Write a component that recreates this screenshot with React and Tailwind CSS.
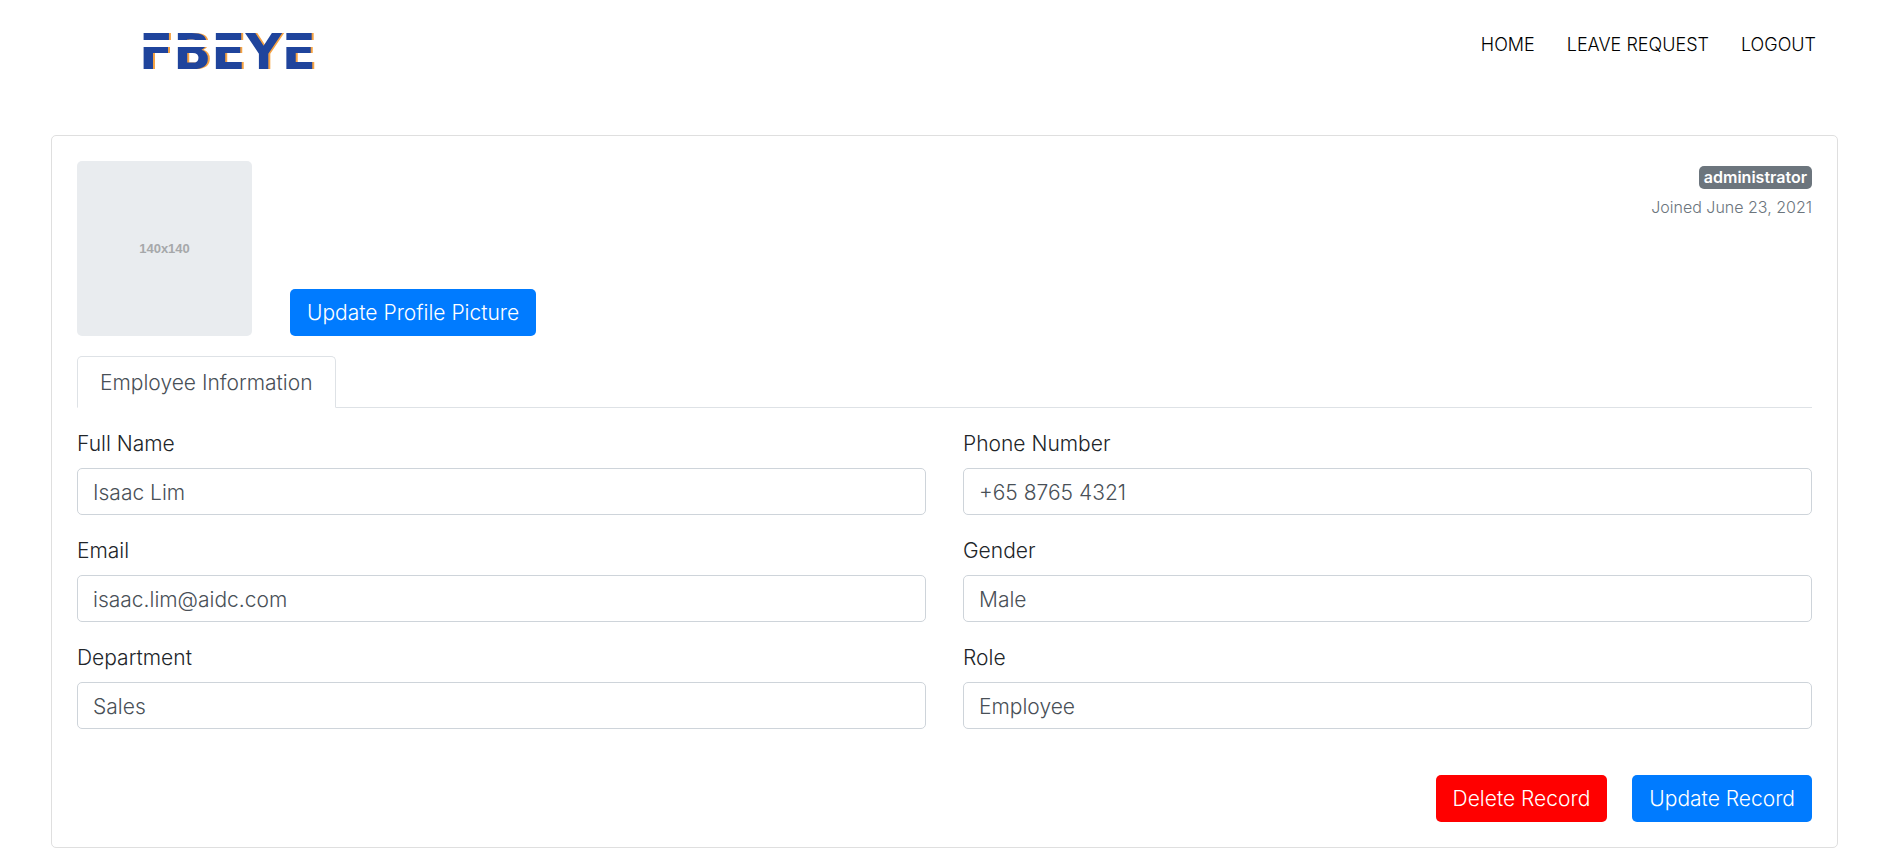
const slit =
  'bg-[linear-gradient(to_bottom,#1f449c_0_12px,transparent_12px_19px,#1f449c_19px)] bg-clip-text text-transparent';

const fields = [
  { id: 'name', label: 'Full Name', value: 'Isaac Lim', type: 'text' },
  { id: 'phone', label: 'Phone Number', value: '+65 8765 4321', type: 'tel' },
  { id: 'email', label: 'Email', value: 'isaac.lim@aidc.com', type: 'email' },
  { id: 'gender', label: 'Gender', value: 'Male', type: 'text' },
  { id: 'department', label: 'Department', value: 'Sales', type: 'text' },
  { id: 'role', label: 'Role', value: 'Employee', type: 'text' },
];

const buttonBase = 'h-[47px] rounded-[5px] px-[17px] pt-px font-light text-white';

function Logo() {
  return (
    <a
      href="#home"
      aria-label="FBEYE"
      className="flex font-['DejaVu_Sans',sans-serif] text-[50px] leading-[48px] font-bold text-[#1f449c] drop-shadow-[2px_0_0_#f5a243]"
    >
      <span className={slit}>FBE</span>
      <span>Y</span>
      <span className={slit}>E</span>
    </a>
  );
}

function Header() {
  return (
    <header className="flex items-start justify-between pt-7 pr-[72px] pl-[139px]">
      <Logo />
      <nav className="flex gap-8 text-[18px] leading-[34px] text-black">
        <a href="#home">HOME</a>
        <a href="#leave">LEAVE REQUEST</a>
        <a href="#logout">LOGOUT</a>
      </nav>
    </header>
  );
}

function Field({ id, label, value, type }) {
  return (
    <div className="flex flex-col gap-2">
      <label htmlFor={id} className="leading-8">
        {label}
      </label>
      <input
        id={id}
        type={type}
        defaultValue={value}
        className="h-[47px] w-full rounded-[5px] border border-[#ced4da] bg-white px-[15px] pt-px font-light text-[#495057] outline-none focus:border-[#80bdff]"
      />
    </div>
  );
}

export default function App() {
  return (
    <div className="min-h-screen bg-white pb-4 font-['Inter',sans-serif] text-[21px] font-light text-[#212529]">
      <Header />
      <main className="mt-[59px] mr-[50px] ml-[51px] rounded-[5px] border border-[#dfdfdf] p-[25px]">
        <section className="flex items-start justify-between">
          <div className="flex items-end gap-[38px]">
            <div className="flex size-[175px] items-center justify-center rounded-[5px] bg-[#e9ecef] font-['Liberation_Sans',sans-serif] text-[13px] font-bold text-[#a6a8aa]">
              140x140
            </div>
            <button type="button" className={`${buttonBase} bg-[#007bff]`}>
              Update Profile Picture
            </button>
          </div>
          <div className="flex flex-col items-end gap-1.5 pt-[5px]">
            <span className="rounded-[5px] bg-[#6c757d] px-[5px] text-[16px] leading-[23px] font-semibold text-white">
              administrator
            </span>
            <span className="text-[16px] leading-6 text-[#6c757d]">Joined June 23, 2021</span>
          </div>
        </section>

        <div role="tablist" className="mt-5 flex border-b border-[#dee2e6]">
          <button
            type="button"
            role="tab"
            aria-selected="true"
            className="-mb-px h-[52px] rounded-t-[5px] border border-[#dee2e6] border-b-white bg-white px-[22px] pt-px font-light text-[#495057]"
          >
            Employee Information
          </button>
        </div>

        <form>
          <div className="mt-5 grid grid-cols-2 gap-x-[37px] gap-y-5">
            {fields.map((field) => (
              <Field key={field.id} {...field} />
            ))}
          </div>
          <div className="mt-[46px] flex justify-end gap-[25px]">
            <button type="button" className={`${buttonBase} bg-[#ff0000]`}>
              Delete Record
            </button>
            <button type="button" className={`${buttonBase} bg-[#007bff]`}>
              Update Record
            </button>
          </div>
        </form>
      </main>
    </div>
  );
}
